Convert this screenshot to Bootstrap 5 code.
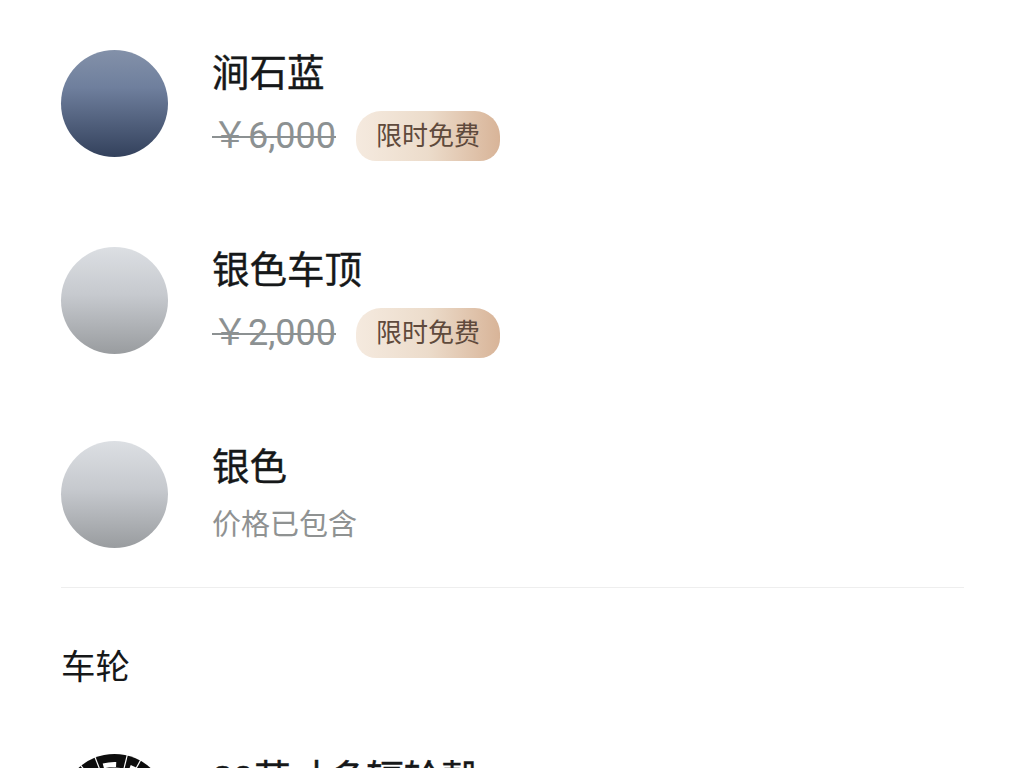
<!DOCTYPE html>
<html lang="zh-CN">
  <head>
    <meta charset="UTF-8" />
    <meta name="viewport" content="width=device-width, initial-scale=1.0" />
    <title>车辆配置</title>
    <link
      href="https://cdn.jsdelivr.net/npm/bootstrap@5.3.2/dist/css/bootstrap.min.css"
      rel="stylesheet"
    />
    <style>
      html,
      body {
        height: 768px;
        overflow: hidden;
      }
      body {
        background: #fff;
        color: #161819;
        font-family: "Liberation Sans", "Noto Sans CJK SC", sans-serif;
      }
      .page-wrap {
        padding: 50px 61px 0;
      }
      .opt-row {
        gap: 44px;
        height: 107px;
      }
      .opt-row + .opt-row {
        margin-top: 90px;
      }
      .opt-row.opt-tight {
        margin-top: 87px;
      }
      .swatch {
        width: 107px;
        height: 107px;
        border-radius: 50%;
        flex-shrink: 0;
      }
      .swatch-blue {
        background: linear-gradient(#8391a9, #6f7f9d 35%, #33415c);
      }
      .swatch-silver {
        background: linear-gradient(#dcdfe3, #c6c9ce 45%, #999c9f);
      }
      .opt-name {
        font-size: 37.5px;
        line-height: 44px;
        margin-top: 1px;
        font-weight: 400;
        -webkit-text-stroke: 0.4px #161819;
      }
      .opt-tight .opt-name {
        margin-top: 4px;
      }
      .opt-meta {
        margin-top: 16px;
        gap: 20px;
        height: 50px;
      }
      .price-old {
        font-family: Roboto, "Noto Sans CJK SC", sans-serif;
        font-size: 36px;
        line-height: 50px;
        color: #8c9192;
        text-decoration: line-through;
        text-decoration-thickness: 2px;
      }
      .promo-tag {
        width: 144px;
        height: 50px;
        line-height: 51px;
        border-radius: 25px 25px 20px 20px;
        text-align: center;
        font-size: 26px;
        color: #5f4a3c;
        background: linear-gradient(90deg, #f5eadf, #ecdccb 50%, #d8b498);
      }
      .opt-included {
        font-size: 29px;
        line-height: 44px;
        color: #8f9292;
        margin-top: 14px;
      }
      .section-rule {
        border-top: 1px solid #eeeeee;
        margin-top: 39px;
        margin-right: -1px;
      }
      .section-title {
        font-size: 34.5px;
        line-height: 44px;
        margin-top: 57px;
        font-weight: 400;
      }
      .wheel-row {
        gap: 44px;
        margin-top: 65px;
      }
      .wheel-icon {
        width: 107px;
        height: 107px;
        flex-shrink: 0;
      }
      .wheel-name {
        font-size: 37.5px;
        line-height: 44px;
        font-weight: 400;
        margin-top: 3px;
        -webkit-text-stroke: 0.4px #161819;
      }
    </style>
  </head>
  <body>
    <div class="page-wrap">
      <div class="opt-row d-flex">
        <div class="swatch swatch-blue"></div>
        <div>
          <div class="opt-name">涧石蓝</div>
          <div class="opt-meta d-flex align-items-center">
            <span class="price-old">￥6,000</span>
            <span class="promo-tag">限时免费</span>
          </div>
        </div>
      </div>
      <div class="opt-row d-flex">
        <div class="swatch swatch-silver"></div>
        <div>
          <div class="opt-name">银色车顶</div>
          <div class="opt-meta d-flex align-items-center">
            <span class="price-old">￥2,000</span>
            <span class="promo-tag">限时免费</span>
          </div>
        </div>
      </div>
      <div class="opt-row opt-tight d-flex">
        <div class="swatch swatch-silver"></div>
        <div>
          <div class="opt-name">银色</div>
          <div class="opt-included">价格已包含</div>
        </div>
      </div>
      <div class="section-rule"></div>
      <div class="section-title">车轮</div>
      <div class="wheel-row d-flex">
        <svg class="wheel-icon" viewBox="0 0 107 107">
          <circle cx="53.5" cy="53.5" r="53.5" fill="#0d0d0d" />
          <circle cx="53.5" cy="53.5" r="40" fill="#fff" />
          <circle cx="53.5" cy="53.5" r="43" fill="none" stroke="#fff" stroke-width="5" stroke-dasharray="13 14" stroke-dashoffset="-2" />
          <g stroke="#fff" stroke-width="1.2">
            <path d="M53.5 53.5 L32 -2" />
            <path d="M53.5 53.5 L67 -2" />
            <path d="M53.5 53.5 L83 0" />
            <path d="M53.5 53.5 L17 8" />
            <path d="M53.5 53.5 L100 10" />
          </g>
        </svg>
        <div class="wheel-name">20英寸多辐轮毂</div>
      </div>
    </div>
    <script src="https://cdn.jsdelivr.net/npm/bootstrap@5.3.2/dist/js/bootstrap.bundle.min.js"></script>
  </body>
</html>
